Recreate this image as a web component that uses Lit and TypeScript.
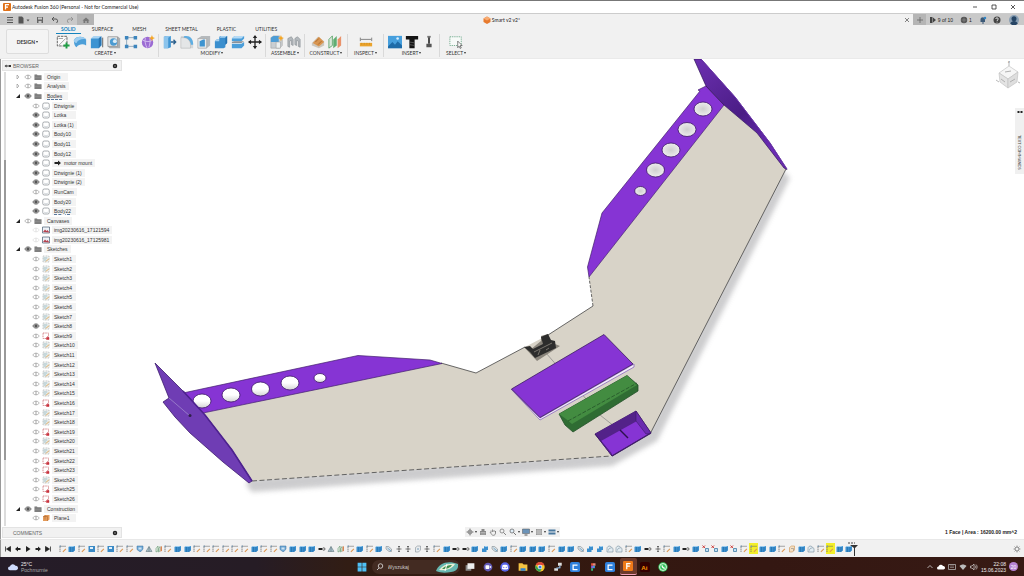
import { LitElement, html, svg, css } from "lit";
import { customElement } from "lit/decorators.js";
import { classMap } from "lit/directives/class-map.js";

const toolIcons: Record<string, unknown> = {
  sketch: svg`<path d="M1.500 1.500h11v11h-11z" fill="#fafafa" stroke="#555" stroke-dasharray="3 1"/><path d="M3 12L11 4M3 4h5" stroke="#999"/><path d="M8.500 12h7M12 8.500v7" stroke="#1f9d45" stroke-width="2.200"/>`,
  form: svg`<path d="M1 6C3 1 12 1 15 5v7c-3-2-8-2-11 2-2-1-3-4-3-8z" fill="#4d9fd8"/><path d="M1 6c3-5 11-5 14-1-4-1-9 0-11 4C2 9 1 8 1 6z" fill="#9ccdf0"/>`,
  extrude: svg`<path d="M1 4l9-3 3 2v9l-3 3H1z" fill="#3d94d2"/><path d="M1 4l3-3h9l-3 3z" fill="#a8d3f2"/><path d="M10 4l3-3v10l-3 4z" fill="#2a75b2"/><path d="M14.500 3v11" stroke="#555"/>`,
  revolve: svg`<path d="M1 2h12l2 2v11H3l-2-2z" fill="#a9adb0"/><path d="M1 2h11v11H1z" fill="#e1e3e4" stroke="#888" stroke-width=".7"/><circle cx="7.500" cy="8" r="4.200" fill="#4b9bd2"/><circle cx="9" cy="7" r="2.200" fill="#dcecf7"/>`,
  pattern: svg`<path d="M3 3h10M3 3v10h10" stroke="#8ba4b8" fill="none"/><g fill="#3d85bd"><path d="M1 1h4v4H1zM11 1h4v4h-4zM1 11h4v4H1zM11 11h4v4h-4z"/></g>`,
  sphere: svg`<circle cx="7.500" cy="8.500" r="6.500" fill="#9b6bd3"/><path d="M2 6c4 2 8 2 11 0M5 3c-1 4 0 8 2 12M10 3c1 4 0 8-1 11" stroke="#d8c2f2" fill="none"/><path d="M12.500 0l1 2.500 2.500 1-2.500 1-1 2.500-1-2.500-2.500-1 2.500-1z" fill="#f5a623"/>`,
  press: svg`<path d="M1 2l3-1h5v13l-3 1H1z" fill="#3f95d3"/><path d="M1 2l3-1h5L6 3v12H1z" fill="#8cc4ec"/><path d="M9 8h6M12 5.500L14.500 8l-2.500 2.500" stroke="#2b5f8c" stroke-width="1.500" fill="none"/>`,
  fillet: svg`<path d="M1 15V1h5c6 0 9 4 9 9v5z" fill="#d4d7d9"/><path d="M5 1h2c5 0 8 4 8 9v1H12C12 7 9 4 4 3z" fill="#5eaee3"/><path d="M1 15V3h3c5 0 8 4 8 8v4z" fill="#e4e6e7" stroke="#aaa" stroke-width=".5"/>`,
  shell: svg`<path d="M1 4l4-3h10v11l-4 3H1z" fill="#b5b9bc"/><path d="M1 4h10v11H1z" fill="#e8eaeb" stroke="#999" stroke-width=".6"/><path d="M3 7l4-2h2v8H3z" fill="#3f94d0"/>`,
  combine: svg`<path d="M6 2l2-1h7v8l-2 2v3l-2 1H1V7l2-2h3z" fill="#3b8fce"/><path d="M6 3l2-2h7l-2 2zM1 7l2-2h3v2z" fill="#a6d1f0"/><path d="M13 3l2-2v8l-2 2z" fill="#2672b0"/>`,
  split: svg`<path d="M1 4l3-3h11v3l-3 3H1z" fill="#4b9ed9"/><path d="M1 4l3-3h11l-3 3z" fill="#b5daf5"/><path d="M1 8l3-1h11l-3 2H1z" fill="#8b9299"/><path d="M1 10h11l3-2v4l-3 3H1z" fill="#4b9ed9"/>`,
  move: svg`<path d="M8 1v14M1 8h14" stroke="#222" stroke-width="1.500"/><path d="M8 0l2.500 3.500h-5zM8 16l2.500-3.500h-5zM0 8l3.500-2.500v5zM16 8l-3.500-2.500v5z" fill="#222"/>`,
  component: svg`<path d="M1 3l3-2h7v3h3v8l-3 3H1z" fill="#c9ced2" stroke="#999" stroke-width=".6"/><path d="M1 3l3-2h6v7H1z" fill="#4d9cd5"/><path d="M7 8h5v7H7z" fill="#edf0f1" stroke="#999" stroke-width=".6"/><path d="M12.500 0l1 2.500 2.500 1-2.500 1-1 2.500-1-2.500-2.500-1 2.500-1z" fill="#f5a623"/>`,
  joint: svg`<path d="M1 13V4l4-2 2 3v7l-2-1V6L3 7v7zM9 11V4l3-2 3 3v9l-2-1V7l-2-1v6z" fill="#b4b9bd" stroke="#868c91" stroke-width=".7"/>`,
  plane: svg`<path d="M1 9l7-7 7 5v5l-6 3-8-3z" fill="#ccc7bd"/><path d="M2 9l7-7 6 6-6 5z" fill="#d99550"/><path d="M5 8l4-4M8 11l4-4" stroke="#a5682b"/>`,
  midplane: svg`<path d="M1 5l4-4v11l-4 3z" fill="#dae8dc" stroke="#5ba56a"/><path d="M6 5l4-4v11l-4 3z" fill="#61ae73"/><path d="M11 5l4-4v11l-4 3z" fill="#e9926a"/>`,
  measure: svg`<path d="M1.500 3v4M14.500 3v4M2 5h12" stroke="#777"/><path d="M1 9h14v4H1z" fill="#eaa32d"/><path d="M3 9v2M6 9v2M9 9v2M12 9v2" stroke="#c98a1c" stroke-width=".7"/>`,
  image: svg`<path d="M0 1h16v14H0z" fill="#469fdd"/><path d="M0 13l5-5 3 3 3-4 5 5v3H0z" fill="#1e6ba8"/><circle cx="11" cy="4" r="1.500" fill="#d9efff"/>`,
  bolt: svg`<path d="M1 1h14v4H1zM5 5h6v10H5z" fill="#151515"/><path d="M5 8l6 1M5 11l6 1" stroke="#777" stroke-width=".7"/>`,
  derive: svg`<path d="M7 1h2v9H7z" fill="#333"/><path d="M5 10h6v4H5z" fill="#555"/><path d="M6 1h4v2H6z" fill="#777"/>`,
  select: svg`<path d="M1 2h13v10H1z" fill="#f7faf8" stroke="#6ea98a" stroke-dasharray="1.500 1"/><path d="M10 7l5 5-2.300.2 1.300 2.500-1.200.6-1.300-2.500L10 14.500z" fill="#fff" stroke="#333" stroke-width=".7"/>`,
};

const featureIcons: Record<string, unknown> = {
  s: svg`<path d="M2 14V2.500h12" fill="none" stroke="#666" stroke-width="1.500" stroke-dasharray="3 1"/><path d="M7 13l6-6 1.500 1.500-6 6z" fill="#dd954d"/><path d="M1 1h3v3H1z" fill="#7c98ae"/>`,
  e: svg`<path d="M1 4l4-2h9v9l-4 3H1z" fill="#3a8fce"/><path d="M1 4l4-2h9l-4 2z" fill="#9dcdf0"/><path d="M10 4v10M5 4v10" stroke="#1f6299"/>`,
  h: svg`<path d="M1 2h13v12H1z" fill="#3a8ac6"/><path d="M4 4h6v4H4z" fill="#dff0fc"/>`,
  v: svg`<path d="M2 2h12v6l-4 5H7L2 9z" fill="#6fa9d6" stroke="#376f9e"/><path d="M5 5h6v4H5z" fill="#cfe3f3"/>`,
  t: svg`<path d="M8 3l6 10H2z" fill="#a9c0ca" stroke="#51686f"/><path d="M8 3v10" stroke="#51686f"/>`,
  g: svg`<path d="M2 14V7l4-5v10zM7 14V7l3-4v9z" fill="#e5efe6" stroke="#498557"/><path d="M11 4l3-2v9l-3 3z" fill="#d98554"/>`,
  c: svg`<path d="M2 3h5l6 5v5H8L2 8z" fill="#dce2e5" stroke="#6d7980"/><path d="M5 6l7 6" stroke="#4f91c0" stroke-width="1.500"/>`,
  m: svg`<path d="M8 2v11M3 8h10M6 4l2-2 2 2M6 12l2 2 2-2" stroke="#444" stroke-width="1.400" fill="none"/>`,
  o: svg`<path d="M3 5l4-3h6v8l-4 4H3z" fill="#e9ecee" stroke="#717d85"/><circle cx="8" cy="8" r="2" fill="#9ab6c9"/>`,
  j: svg`<path d="M1 6h7v4H1z" fill="#222"/><circle cx="11.500" cy="8" r="2.500" fill="none" stroke="#333" stroke-width="1.400"/>`,
  b: svg`<path d="M6 2h8v8h-3v4H2V7h4z" fill="#3b8fce"/><path d="M6 4l2-2h6l-1 2z" fill="#a2cff0"/>`,
  f: svg`<path d="M2 14V7c0-4 3-5 6-5l6 5v7z" fill="#e3edf3" stroke="#637a8a"/><path d="M5 11c0-4 2-5 6-5" stroke="#637a8a" fill="none"/>`,
  x: svg`<path d="M1 1l5 5M6 1L1 6" stroke="#c9302c" stroke-width="1.800"/><path d="M7 7h6v6H7z" fill="#c5dff1" stroke="#36759f" stroke-width="1.500"/>`,
  r: svg`<path d="M3 5l4-3h6v8l-4 4H3z" fill="#f4dfc3" stroke="#c58236"/><path d="M6 7h5v5" stroke="#777" fill="none"/>`,
};
const featureNames: Record<string, string> = { s: "Sketch", e: "Extrude", h: "Hole", v: "Form", t: "Loft", g: "Plane", c: "Sweep", m: "Move", o: "Offset", j: "Joint", b: "Combine", f: "Fillet", x: "Remove", r: "Revolve" };
// One letter per timeline feature; a capital marks a highlighted one.
const features = "seshshssvtgseessssssessveeejtgsesecmmomsejjebceseeeseecbbffsejmsejexxexsSeesrefsSee";

const treeIcons: Record<string, unknown> = {
  folder: svg`<path d="M1 3h5l1 1.500h8V14H1z" fill="#777"/><path d="M1 6h14M1 9h14M1 12h14" stroke="#aaa" stroke-width=".7"/>`,
  body: svg`<rect x="1.500" y="2" width="13" height="12" rx="3" fill="#fff" stroke="#7a8087" stroke-width="1.300"/><path d="M4 10c2 2 6 2 8 0" stroke="#a8b2ba" fill="none"/>`,
  canvas: svg`<path d="M1 2h14v12H1z" fill="#eef3f8" stroke="#53657a" stroke-width="1.500"/><path d="M2 12l4-5 3 3 2-2 4 5z" fill="#b74450"/>`,
  sketch: svg`<path d="M2 2h12v12H2z" fill="#f8f9f9" stroke="#8a9193" stroke-dasharray="2 1"/><path d="M3 6h8M3 10h6" stroke="#6d9ba3" stroke-width="1.400"/><path d="M8 13l6-6" stroke="#d8a354" stroke-width="2"/>`,
  locked: svg`<path d="M2 2h11v11H2z" fill="#fff" stroke="#c05058" stroke-dasharray="3 1.500" stroke-width="1.300"/><path d="M11 8v3M9 11h5v4H9z" fill="#c8313c" stroke="#c8313c"/>`,
  plane: svg`<path d="M2 5l4-3h9v9l-4 3H2z" fill="#e49a58"/><path d="M2 5h9v9M6 2v9" stroke="#a7602c" fill="none"/>`,
};

interface Node { label: string; icon: string; visible?: boolean; faint?: boolean; group?: boolean; open?: boolean; linked?: boolean; active?: boolean }
const g = (label: string, visible: boolean, open: boolean, active = false): Node => ({ label, icon: "folder", group: true, visible, open, active });
const b = (label: string, visible = true, extra = {}): Node => ({ label, icon: "body", visible, ...extra });
const lockedSketches = [9, 16, 19, 22, 23, 25, 26];
const tree: Node[] = [
  g("Origin", false, false), g("Analysis", false, false), g("Bodies", true, true, true),
  b("Dźwignie", false), b("Lotka"), b("Lotka (1)"), b("Body10"), b("Body11"), b("Body12"),
  b("motor mount", true, { linked: true }), b("Dźwignie (1)"), b("Dźwignie (2)"), b("RunCam", false),
  b("Body20"), b("Body22", true, { active: true }),
  g("Canvases", false, true),
  { label: "img20230616_17121594", icon: "canvas", faint: true }, { label: "img20230616_17125981", icon: "canvas", faint: true },
  g("Sketches", true, true),
  ...Array.from({ length: 26 }, (_, i): Node => ({ label: `Sketch${i + 1}`, icon: lockedSketches.includes(i + 1) ? "locked" : "sketch", visible: i === 7 })),
  g("Construction", true, true),
  { label: "Plane1", icon: "plane" },
];

const groups = [
  { name: "CREATE", tools: ["sketch", "form", "extrude", "revolve", "pattern", "sphere"] },
  { name: "MODIFY", tools: ["press", "fillet", "shell", "combine", "split", "move"] },
  { name: "ASSEMBLE", tools: ["component", "joint"] },
  { name: "CONSTRUCT", tools: ["plane", "midplane"] },
  { name: "INSPECT", tools: ["measure"] },
  { name: "INSERT", tools: ["image", "bolt", "derive"] },
  { name: "SELECT", tools: ["select"] },
];

const ic = (body: unknown, cls = "i8") => html`<svg class=${cls} viewBox="0 0 16 16" aria-hidden="true">${body}</svg>`;

const base = css`
  * { box-sizing: border-box; }
  button { font: inherit; color: inherit; background: none; border: 0; padding: 0; margin: 0; display: flex; align-items: center; justify-content: center; white-space: nowrap; }
  svg { display: block; flex: none; }
  .i8 { width: 8px; height: 8px; }
  .i10 { width: 10px; height: 10px; }
  .i14 { width: 14px; height: 14px; }
`;

@customElement("title-bar")
class TitleBar extends LitElement {
  static styles = [base, css`
    :host { display: block; color: #222; }
    .title { height: 13px; border-top: 1px solid #777; background: #fff; display: flex; align-items: center; padding: 0 2px 0 3px; gap: 1px; font-size: 5px; }
    .name { flex: 1; }
    .win { width: 18px; height: 10px; }
    .tabs { height: 12px; display: flex; background: #f1f1f1; border-top: 1px solid #ccc; }
    .quick { display: flex; background: #c9c9c9; padding-left: 2px; }
    .quick button { width: 15px; }
    .quick .home { width: 17px; background: #b3b3b3; }
    .doc { flex: 1; display: flex; align-items: center; justify-content: center; gap: 1px; font-size: 5px; padding-left: 8px; }
    .side { display: flex; background: #c9c9c9; font-size: 5px; font-family: "Liberation Sans", Arial, sans-serif; align-items: stretch; }
    .close { width: 12px; }
    .side button { width: 14px; gap: 1px; }
    .side .plus { width: 13px; background: #b5b5b5; }
    .side .jobs { width: 30px; }
    .side .user { width: 20px; }
    .side .clock { width: 20px; }
  `];
  render() {
    return html`
      <div class="title">
        ${ic(svg`<rect width="16" height="16" rx="2" fill="#df7018"/><path d="M5 13V3h7M5 8h5" stroke="#fff" stroke-width="2.500" fill="none"/>`)}
        <span class="name">Autodesk Fusion 360 (Personal - Not for Commercial Use)</span>
        <button class="win" aria-label="Minimize">${ic(svg`<path d="M4 8h8" stroke="#222" stroke-width="1.500"/>`)}</button>
        <button class="win" aria-label="Maximize">${ic(svg`<path d="M4 4h8v8H4z" stroke="#222" stroke-width="1.500" fill="none"/>`)}</button>
        <button class="win" aria-label="Close">${ic(svg`<path d="M4 4l8 8M12 4l-8 8" stroke="#222" stroke-width="1.500"/>`)}</button>
      </div>
      <div class="tabs">
        <div class="quick">
          <button aria-label="Data panel">${ic(svg`<path d="M2 3h12M2 8h12M2 13h12" stroke="#555" stroke-width="2"/>`)}</button>
          <button aria-label="File">${ic(svg`<path d="M3 1h7l3 3v11H3z" fill="#555"/>`)}${ic(svg`<path d="M3 7h6l-3 4z" fill="#555"/>`, "i8")}</button>
          <button aria-label="Save">${ic(svg`<path d="M2 2h12v12H2z" fill="#666"/><path d="M4 3h8v4H4zM5 10h6v4H5z" fill="#c9c9c9"/>`)}</button>
          <button aria-label="Undo">${ic(svg`<path d="M3 6h7c4 0 4 6 1 8M6 2L2 6l4 4" stroke="#555" stroke-width="2" fill="none"/>`)}</button>
          <button aria-label="Redo">${ic(svg`<path d="M13 6H6c-4 0-4 6-1 8M10 2l4 4-4 4" stroke="#888" stroke-width="1.600" fill="none"/>`)}</button>
          <button class="home" aria-label="Home">${ic(svg`<path d="M1 9l7-6 7 6h-2v5H3V9z" fill="#777"/><path d="M7 10h2v4H7z" fill="#ccc"/>`)}</button>
        </div>
        <div class="doc">
          ${ic(svg`<path d="M8 1l7 4v7l-7 4-7-4V5z" fill="#e77a2d"/><path d="M8 1l7 4-7 4-7-4z" fill="#f7ab72"/>`)}
          <span>Smart v2 v2*</span>
        </div>
        <button class="close" aria-label="Close document">${ic(svg`<path d="M4 4l8 8M12 4l-8 8" stroke="#444" stroke-width="1.300"/>`)}</button>
        <div class="side">
          <button class="plus" aria-label="New design">${ic(svg`<path d="M8 2v12M2 8h12" stroke="#666" stroke-width="1.600"/>`)}</button>
          <button class="jobs">${ic(svg`<path d="M2 2h5v12H2zM8 3l6 5-6 5z" fill="#444"/>`)}<span>9 of 10</span></button>
          <button class="clock" aria-label="Job status">${ic(svg`<circle cx="8" cy="8" r="6.500" fill="#555"/><path d="M8 3v10M3 8h10" stroke="#999"/>`)}<span>1</span></button>
          <button aria-label="Notifications">${ic(svg`<path d="M3 12V7c0-6 9-6 9 0v5zM6 13h4v2H6z" fill="#3c5a78"/><circle cx="12" cy="4" r="2.500" fill="#3286c5"/>`)}</button>
          <button aria-label="Help">${ic(svg`<circle cx="8" cy="8" r="7" fill="#444"/><path d="M5.500 6c0-3.500 5-3 5 0 0 2-2.500 1.800-2.500 4M8 11.500v1.500" stroke="#fff" stroke-width="1.600" fill="none"/>`)}</button>
          <button class="user" aria-label="Account">${ic(svg`<circle cx="8" cy="8" r="8" fill="#8aa0b5"/><circle cx="8" cy="6" r="4" fill="#264565"/><path d="M2 14c2-6 10-6 12 0l-3 2H5z" fill="#264565"/>`, "i10")}</button>
        </div>
      </div>`;
  }
}

@customElement("tool-ribbon")
class ToolRibbon extends LitElement {
  static styles = [base, css`
    :host { display: flex; background: #f1f1f1; height: 34px; font-size: 5px; color: #333; border-bottom: 1px solid #eaeaea; }
    .design { width: 43px; height: 25px; margin: 4px 5px 0 6px; border: 1px solid #ddd; border-radius: 2px; background: #f4f4f4; font-weight: 700; }
    .main { display: flex; flex-direction: column; }
    .tabs { display: flex; gap: 19px; height: 9px; padding-left: 2px; }
    .tabs button { border-bottom: 1px solid transparent; height: 9px; }
    .tabs .on { color: #1583bd; border-color: #1583bd; padding: 0 5px; margin-right: -8px; font-weight: 700; }
    .groups { display: flex; }
    .group { display: flex; flex-direction: column; align-items: center; padding: 0 2px; border-right: 1px solid #d9d9d9; height: 23px; }
    .group:first-child { padding-left: 0; }
    .wide { padding: 0 4px; }
    .single { padding: 0 6px; }
    .group:last-child { border: 0; }
    .tools { display: flex; }
    .tool { width: 17px; height: 16px; }
    .menu { height: 6px; gap: 1px; }
    .caret { border: 1px solid transparent; border-top: 2px solid #333; border-bottom: 0; }
  `];
  render() {
    return html`
      <button class="design">DESIGN&nbsp;<span class="caret"></span></button>
      <div class="main">
        <nav class="tabs">
          ${["SOLID", "SURFACE", "MESH", "SHEET METAL", "PLASTIC", "UTILITIES"].map((t, i) => html`<button class=${classMap({ on: i === 0 })}>${t}</button>`)}
        </nav>
        <div class="groups">
          ${groups.map(gr => html`<div class=${classMap({ group: true, wide: gr.name === "CONSTRUCT", single: gr.tools.length === 1 })}>
            <div class="tools">${gr.tools.map(t => html`<button class="tool" aria-label=${t}>${ic(toolIcons[t], "i14")}</button>`)}</div>
            <button class="menu">${gr.name}<span class="caret"></span></button>
          </div>`)}
        </div>
      </div>`;
  }
}

@customElement("browser-panel")
class BrowserPanel extends LitElement {
  static styles = [base, css`
    :host { display: flex; flex-direction: column; width: 122px; border-left: 1px solid #999; font-size: 5px; font-family: "Liberation Sans", Arial, sans-serif; color: #333; padding-left: 1px; }
    .bar { display: flex; align-items: center; height: 11px; flex: none; background: #f1f1f1; border: 1px solid #e3e3e3; padding: 0 2px 0 1px; gap: 1px; color: #666; margin: 1px 0; }
    .bar span { flex: 1; }
    .body { flex: 1; min-height: 0; display: flex; }
    .scroll { width: 2px; margin: 0 8px 0 2px; background: #dcdcdc; display: flex; flex-direction: column; }
    .thumb { height: 66%; margin-top: 88px; background: #999; }
    .list { flex: 1; display: flex; flex-direction: column; list-style: none; margin: 0; padding: 0 0 3px; }
    .row { flex: 1; min-height: 0; display: flex; align-items: center; gap: 2px; padding-left: 18px; }
    .group { padding-left: 0; }
    .chip { background: #f3f3f3; padding: 0 3px; line-height: 8px; height: 8px; white-space: nowrap; display: flex; align-items: center; gap: 2px; min-width: 24px; }
    .row:not(.group) .chip { padding-left: 2px; }
    .active .chip { text-decoration: underline dashed #58789c; }
    .faint { opacity: .35; }
  `];
  render() {
    const dot = ic(svg`<circle cx="8" cy="8" r="4.500" fill="#222"/><path d="M6 8h4" stroke="#fff"/>`);
    return html`
      <div class="bar">${ic(svg`<path d="M1 8l4-3v2h3v2H5v2zM9 6h5v4H9z" fill="#333"/>`)}<span>BROWSER</span><button aria-label="Pin browser">${dot}</button></div>
      <div class="body">
        <div class="scroll"><div class="thumb"></div></div>
        <ul class="list">
          ${tree.map(n => html`<li class=${classMap({ row: true, group: !!n.group, active: !!n.active })}>
            ${n.group ? html`<button aria-label="Toggle ${n.label}">${ic(n.open ? svg`<path d="M12 4v8H4z" fill="#222"/>` : svg`<path d="M6 4l4 4-4 4z" fill="#fff" stroke="#777"/>`)}</button>` : ""}
            <button class=${classMap({ faint: !!n.faint })} aria-label="Visibility of ${n.label}">${ic(n.visible
              ? svg`<path d="M1.500 8c3-6 10-6 13 0-3 6-10 6-13 0z" fill="#aaa" stroke="#666" stroke-width="1.300"/><circle cx="8" cy="8" r="2.800" fill="#555"/>`
              : svg`<path d="M1.500 8c3-5 10-5 13 0-3 5-10 5-13 0z" fill="#fff" stroke="#999" stroke-width="1.300"/><path d="M8 4v8" stroke="#888" stroke-width="1.500"/>`)}</button>
            ${ic(treeIcons[n.icon])}
            <span class="chip">${n.linked ? ic(svg`<path d="M1 6h7V3l6 5-6 5v-3H1z" fill="#222"/>`) : ""}${n.label}</span>
          </li>`)}
        </ul>
      </div>
      <div class="bar">${ic(svg``)}<span>COMMENTS</span><button aria-label="Add comment">${dot}</button></div>`;
  }
}

@customElement("model-view")
class ModelView extends LitElement {
  static styles = [base, css`
    :host { display: block; background: #fff; min-width: 0; min-height: 0; }
    .scene { width: 100%; height: 100%; }
    .edge { fill: none; stroke: #444; stroke-width: .8; }
    .tag { font-size: 4px; fill: #888; }
  `];
  render() {
    const holes = (list: number[][], fill: string) => list.map(([x, y, rx, ry]) => svg`<ellipse cx=${x} cy=${y} rx=${rx} ry=${ry} fill=${fill} stroke="#3b1466" stroke-width=".8"/>`);
    return html`<svg class="scene" viewBox="0 59 1024 480" role="img" aria-label="Flying wing model">
      <defs>
        <filter id="soft" x="-10%" y="-10%" width="120%" height="120%"><feGaussianBlur stdDeviation="2.500"/></filter>
        <linearGradient id="holeL" x1="0" y1="0" x2="0" y2="1"><stop offset=".5" stop-color="#fff"/><stop offset="1" stop-color="#d4d4d4"/></linearGradient>
        <radialGradient id="holeR"><stop offset="0" stop-color="#cfcfcf"/><stop offset="1" stop-color="#ececec"/></radialGradient>
        <linearGradient id="fin" x1="700" y1="60" x2="770" y2="150" gradientUnits="userSpaceOnUse"><stop offset="0" stop-color="#6a2fae"/><stop offset=".6" stop-color="#4a1c85"/><stop offset="1" stop-color="#6b2bb5"/></linearGradient>
      </defs>
      <path d="M246 485L252 492L612 466L657 441L790 178L782 170L648 430L611 452L250 478z" fill="#c4c4c6" filter="url(#soft)" opacity=".85"/>
      <path d="M203 413L441 363L476 373L525 347L548 335L593 306L589 277L724 105L757 133L786 169L650 434L611 456L252 481L230 447z" fill="#d8d3c8"/>
      <path d="M441 363L476 373L525 347M548 335L593 306" class="edge"/>
      <path d="M593 306L589 277" class="edge" stroke-dasharray="3 1.500"/>
      <path d="M786 169L650 434" class="edge"/>
      <path d="M252 481L611 456" class="edge" stroke-dasharray="5 2.500"/>
      <path d="M706 86L724 105L589 277L587.500 267L602 213L700 91L698 90z" fill="#8634d4" stroke="#42206b" stroke-width=".7"/>
      ${holes([[703, 109, 9, 7], [687, 129.500, 9, 7], [671, 150, 9, 7], [655.500, 170, 9, 7], [640.500, 191, 5.800, 4.500]], "url(#holeR)")}
      <path d="M694 59H701L735 97L770 143L787 169.500L784 168L757 133L724 105L706 86z" fill="url(#fin)" stroke="#2f1257" stroke-width=".7"/>
      <path d="M701 59L735 97L770 143L787 169" stroke="#6f35b3" fill="none"/>
      <path d="M183 393L358 355.500L430 360L442 363.500L203 413z" fill="#8634d4" stroke="#42206b" stroke-width=".7"/>
      ${holes([[202, 401, 9, 7], [231, 395, 9, 7], [260.500, 389, 9, 7], [290, 383, 9, 7], [320, 378, 6, 4.500]], "url(#holeL)")}
      <path d="M155 363L183 391L205 415L232 450L252 481L249 483L223 462L190 433L175 417L163 402L169 398z" fill="#6f3db4" stroke="#3e1c6e" stroke-width=".8"/>
      <path d="M169 398L190 416" stroke="#9678c9"/><circle cx="190" cy="415.500" r="1.500" fill="#30204a"/>
      <path d="M183 391L205 415L232 450L252 481" stroke="#4e2290" stroke-width="1.600" fill="none"/>
      <path d="M546 353L600 415L624 434" stroke="#777" stroke-width=".6" fill="none"/>
      <path d="M524 347L530 350L541 341L541 336L548 334L550 342L560 346L537 361z" fill="#8a857c"/>
      <path d="M524 347L530 346L533 349L543 344L541 337L548 334L551 340L555 341L556 348L535 358L530 352z" fill="#2c2c2c"/>
      <path d="M534 352L552 343M538 355L540 350M546 350l3-2" stroke="#77736c"/>
      <path d="M511 389L540 420L634 367V364L540 418z" fill="#f1edf8" stroke="#8c67bc" stroke-width=".8"/>
      <path d="M511.500 389L604 334.500L633 364L540 417.500z" fill="#8634d4" stroke="#3b1c60" stroke-width=".8"/>
      <path d="M559 414L627 375.500L638 385V391L573 432L565 425z" fill="#2f6c33" stroke="#23502a" stroke-width=".8"/>
      <path d="M559 414L627 375.500L637 385L572 424L566 419z" fill="#438c41"/>
      <path d="M568 421L637 383" stroke="#1f4a25" stroke-dasharray="4 1.500" stroke-width=".7"/>
      <path d="M595 434L636 411L651 433L612 456z" fill="#8634d4" stroke="#35155c" stroke-width=".8"/>
      <path d="M595 434L636 411L637 421L601 441z" fill="#532289"/><path d="M636 411L651 433L646 434L636 421zM595 434L601 441L611 453L612 456z" fill="#6a2cae" stroke="#35155c" stroke-width=".5"/>
      <path d="M620 430L628 438" stroke="#2d114e" stroke-width="1.500"/>
      <path d="M612 456L651 433" fill="none" stroke="#41206a" stroke-width="1.300"/>
      <g stroke="#c4c4c4" stroke-width=".7"><path d="M999 73L1009 66L1018 72L1008 79z" fill="#f6f6f6"/><path d="M999 73L1008 79V88L1000 82z" fill="#e4e4e4"/><path d="M1008 79L1018 72L1017 82L1008 88z" fill="#dedede"/><path d="M1009 66V61M999 82l-3-2M1018 82l2 1" stroke="#999"/></g>
      <path d="M1005 72l6-1M1010 82l5-3M1001 79l4 3" stroke="#b0b0b0"/><text class="tag" x="1008" y="63">z</text>
    </svg>`;
  }
}

@customElement("feature-timeline")
class FeatureTimeline extends LitElement {
  static styles = [base, css`
    :host { display: flex; align-items: center; height: 18px; background: #f1f1f1; border-top: 1px solid #e8e8e8; border-left: 1px solid #999; padding-left: 2px; }
    .play { width: 10px; height: 12px; }
    .controls { display: flex; width: 55px; }
    .track { width: 78%; display: flex; }
    .item { flex: 1; min-width: 0; height: 11px; }
    .lit { background: #f2ee2a; }
    .marker { width: 10px; height: 16px; margin-left: -6px; }
    .spacer { flex: 1; }
    .gear { width: 15px; }
  `];
  render() {
    const play = [
      ["First", svg`<path d="M3 3v10M13 3v10L5 8z" fill="#222" stroke="#222" stroke-width="1.500"/>`],
      ["Previous", svg`<path d="M2 8l6-5v3h5v4H8v3z" fill="#222"/>`],
      ["Play", svg`<path d="M4 2l9 6-9 6z" fill="#222"/>`],
      ["Next", svg`<path d="M14 8L8 3v3H3v4h5v3z" fill="#222"/>`],
      ["Last", svg`<path d="M13 3v10M3 3v10l8-5z" fill="#222" stroke="#222" stroke-width="1.500"/>`],
    ];
    return html`
      <div class="controls">${play.map(([n, p]) => html`<button class="play" aria-label=${n}>${ic(p)}</button>`)}</div>
      <div class="track">${[...features].map(f => html`<button class=${classMap({ item: true, lit: f === "S" })} aria-label=${featureNames[f.toLowerCase()]}>${ic(featureIcons[f.toLowerCase()])}</button>`)}</div>
      <svg class="marker" viewBox="0 0 10 16" aria-hidden="true"><path d="M0 2h7" stroke="#444" stroke-dasharray="2 1"/><path d="M2 4h8L7 7v8H6V7z" fill="#333"/></svg>
      <span class="spacer"></span>
      <button class="gear" aria-label="Timeline settings">${ic(svg`<circle cx="8" cy="8" r="4" fill="none" stroke="#888" stroke-width="2"/><path d="M8 1v3M8 12v3M1 8h3M12 8h3M3 3l2 2M11 11l2 2M13 3l-2 2M5 11l-2 2" stroke="#888" stroke-width="1.500"/>`)}</button>`;
  }
}

@customElement("desktop-taskbar")
class DesktopTaskbar extends LitElement {
  static styles = [base, css`
    :host { display: grid; grid-template-columns: 1fr auto 1fr; align-items: center; height: 19px; background: linear-gradient(90deg, #251c28, #261c25 25%, #321d14 34%, #33190f 50%, #341712 75%, #371a14); color: #eee; font-family: "Liberation Sans", Arial, sans-serif; font-size: 5px; line-height: 6px; }
    .weather { display: flex; gap: 3px; padding-left: 8px; align-items: center; }
    .dim { color: #aaa; }
    .center { display: flex; align-items: center; padding-left: 4px; }
    .app { width: 17px; height: 17px; margin-right: 1px; border-radius: 2px; }
    .app:nth-child(even) { margin-right: 0; }
    .on { background: #6d3b2c; border-bottom: 1px solid #f0a0b8; }
    .search { display: flex; align-items: center; gap: 4px; width: 88px; height: 14px; margin: 0 2px 0 5px; padding: 0 2px 0 4px; border-radius: 7px; background: #432b22; }
    .field { flex: 1; min-width: 0; background: none; border: 0; padding: 0; color: #ddd; font: inherit; outline: 0; }
    .field::placeholder { color: #ccc; opacity: 1; }
    .fish { width: 22px; height: 12px; }
    .tray { display: flex; align-items: center; justify-content: flex-end; gap: 3px; padding-right: 6px; }
    .time { text-align: right; }
    .badge { width: 9px; height: 9px; border-radius: 50%; background: #b583d4; color: #fff; display: grid; place-items: center; }
    .txt { font-weight: 700; fill: #f90; font-size: 10px; }
  `];
  render() {
    const blue = svg`<rect width="16" height="16" rx="3" fill="#2f80dc"/><path d="M12 5H5v7h7" stroke="#fff" stroke-width="2" fill="none"/>`;
    const apps: [string, unknown][] = [
      ["Task view", svg`<path d="M1 5h9v9H1z" fill="#888"/><path d="M4 2h11v9H4z" fill="#eee"/>`],
      ["Chat", svg`<circle cx="8" cy="8" r="7" fill="#6057b5"/><rect x="4" y="5" width="6" height="6" rx="1" fill="#fff"/><path d="M10 8l3-2v4z" fill="#fff"/>`],
      ["Discord", svg`<circle cx="8" cy="8" r="7.500" fill="#5865e8"/><path d="M4 5c3-1 5-1 8 0l1 6-3 1H6l-3-1z" fill="#fff"/><circle cx="6" cy="8.500" r="1" fill="#5865e8"/><circle cx="10" cy="8.500" r="1" fill="#5865e8"/>`],
      ["Files", svg`<path d="M1 2h6l2 2h6v10H1z" fill="#f5c343"/><path d="M4 10h8v4H4z" fill="#2d83d4"/>`],
      ["Chrome", svg`<circle cx="8" cy="8" r="7.500" fill="#f4c62c"/><path d="M1 5a7.500 7.500 0 0 1 14 0H8z" fill="#df4a38"/><path d="M1 5a7.500 7.500 0 0 0 7 10.500L11 10H5z" fill="#36a052"/><circle cx="8" cy="8" r="3.500" fill="#fff"/><circle cx="8" cy="8" r="2.500" fill="#3c79dd"/>`],
      ["Remote", svg`<path d="M8 1h6v5H8zM2 10h6v4H2z" fill="#ddd"/><path d="M11 6v3L5 10" stroke="#8bb6e0" stroke-width="2" fill="none"/>`],
      ["Cura", blue],
      ["Figma", svg`<path d="M5 2h3v4H5z" fill="#e7573a"/><path d="M8 2h4v4H8z" fill="#e58a7a"/><path d="M5 6h3v4H5z" fill="#8d57d8"/><path d="M8 6h3v4H8z" fill="#3f9fe0"/><path d="M5 10h3v4H5z" fill="#37b779"/>`],
      ["Slicer", blue],
      ["Fusion", svg`<rect width="16" height="16" rx="2" fill="#ef7a19"/><path d="M6 13V4h6M6 8h5" stroke="#fff" stroke-width="2" fill="none"/>`],
      ["Illustrator", svg`<rect width="16" height="16" rx="3" fill="#330000"/><text x="2" y="12" class="txt">Ai</text>`],
      ["WhatsApp", svg`<circle cx="8" cy="8" r="7.500" fill="#35c45c"/><circle cx="8" cy="8" r="5.500" fill="none" stroke="#fff" stroke-width="1.300"/><path d="M5.500 5c0 3 2 5.500 5 6l.5-2-2-.5-1.500-2 .5-1z" fill="#fff"/>`],
    ];
    return html`
      <div class="weather">${ic(svg`<path d="M3 13a3 3 0 0 1 0-6 5 5 0 0 1 9-1 3.500 3.500 0 0 1 1 7z" fill="#cfdcff"/>`, "i10")}<div>25°C<br><span class="dim">Pochmurnie</span></div></div>
      <div class="center">
        <button aria-label="Start">${ic(svg`<path d="M1 1h6.500v6.500H1zM8.500 1H15v6.500H8.500zM1 8.500h6.500V15H1zM8.500 8.500H15V15H8.500z" fill="#4fc0f5"/>`, "i10")}</button>
        <label class="search">${ic(svg`<circle cx="9" cy="6" r="4.500" fill="none" stroke="#eee" stroke-width="1.500"/><path d="M6 10l-4 4" stroke="#eee" stroke-width="1.500"/>`)}
          <input class="field" type="text" placeholder="Wyszukaj" aria-label="Wyszukaj">
          <svg class="fish" viewBox="0 0 22 12" aria-hidden="true"><path d="M0 10C3 2 12-1 22 3c1 4-2 8-7 8-6 1-10 1-15-1z" fill="#66b7b0"/><path d="M3 9c4-5 9-7 16-6-3 5-9 7-16 6z" fill="#e9efd6"/><path d="M6 8c3-3 6-4 10-4-2 3-5 4-10 4z" fill="#3e8f4d"/><path d="M11 3l-2 7" stroke="#fff"/></svg>
        </label>
        ${apps.map(([n, p]) => html`<button class=${classMap({ app: true, on: n === "Fusion" })} aria-label=${n}>${ic(p, "i10")}</button>`)}
      </div>
      <div class="tray">
        ${ic(svg`<path d="M3 10l5-5 5 5" stroke="#ddd" stroke-width="1.500" fill="none"/>`)}
        ${ic(svg`<path d="M3 13a3 3 0 0 1 0-6 5 5 0 0 1 9-1 3.500 3.500 0 0 1 1 7z" fill="#fff"/>`)}
        ${ic(svg`<path d="M1 3h14v10H1z" fill="none" stroke="#bbb" stroke-width="1.500"/><path d="M4 6h8M4 9h8" stroke="#bbb"/>`)}
        ${ic(svg`<path d="M1 6c4-4 10-4 14 0l-7 8z" fill="#bbb"/>`)}
        ${ic(svg`<path d="M1 6h3l4-4v12l-4-4H1zM10 5c2 2 2 4 0 6M12 3c3 3 3 7 0 10" fill="none" stroke="#ddd" stroke-width="1.300"/>`)}
        <div class="time">22:08<br>15.06.2023</div>
        <span class="badge">20</span>
      </div>`;
  }
}

@customElement("app-root")
class AppRoot extends LitElement {
  static styles = [base, css`
    :host { display: grid; grid-template-rows: auto auto 1fr auto auto; height: 100vh; overflow: hidden; font-family: Lato, "Liberation Sans", Arial, sans-serif; background: #fff; }
    .work { display: grid; grid-template-columns: 122px 1fr auto; grid-template-rows: 1fr auto; min-height: 0; }
    .model { grid-area: 1 / 1 / 3 / 4; }
    .browser { grid-area: 1 / 1 / 3 / 2; z-index: 1; min-height: 0; }
    .panel { grid-area: 1 / 3 / 2 / 4; z-index: 1; width: 9px; height: 66px; margin-top: 49px; background: #f0f0f0; display: flex; flex-direction: column; align-items: center; justify-content: space-between; font-size: 4px; color: #444; }
    .vert { writing-mode: vertical-rl; padding-bottom: 4px; }
    .foot { grid-area: 2 / 1 / 3 / 4; z-index: 1; display: grid; grid-template-columns: 1fr auto 1fr; align-items: center; height: 14px; font-size: 5px; }
    .nav { grid-column: 2; display: flex; background: #f1f1f1; height: 10px; padding: 0 1px; gap: 2px; align-items: center; }
    .caret { border: 1px solid transparent; border-top: 2px solid #333; border-bottom: 0; margin-left: 1px; }
    .status { text-align: right; font-weight: 700; color: #222; padding-right: 7px; font-family: "Liberation Sans", Arial, sans-serif; }
  `];
  render() {
    const nav: [string, unknown, boolean][] = [
      ["Orbit", svg`<path d="M8 1v14M1 8h14" stroke="#666" stroke-width="1.500"/><circle cx="8" cy="8" r="4" fill="none" stroke="#666" stroke-width="1.300"/>`, true],
      ["Look at", svg`<path d="M2 6h12v8H2zM5 2h6v4H5z" fill="#888"/><path d="M3 9h10M3 12h10" stroke="#ddd"/>`, false],
      ["Pan", svg`<path d="M4 9V5M7 8V3M10 8V4M13 9V6v4c0 6-7 6-9 1L2 8" stroke="#777" stroke-width="1.600" fill="none"/>`, false],
      ["Zoom", svg`<circle cx="6" cy="6" r="4" fill="none" stroke="#777" stroke-width="1.500"/><path d="M9 9l5 5" stroke="#777" stroke-width="1.800"/>`, false],
      ["Fit", svg`<circle cx="6" cy="6" r="4" fill="#e0eef8" stroke="#666" stroke-width="1.500"/><path d="M9 9l5 5" stroke="#666" stroke-width="1.800"/>`, true],
      ["Display", svg`<path d="M1 2h14v9H1z" fill="#6b93b8" stroke="#555"/><path d="M5 14h6" stroke="#555" stroke-width="2"/>`, true],
      ["Grid", svg`<path d="M2 2h12v12H2z" fill="#999"/><path d="M2 6h12M2 10h12M6 2v12M10 2v12" stroke="#ddd"/>`, true],
      ["Viewports", svg`<path d="M1 3h14v4H1zM1 9h14v4H1z" fill="#49789f"/>`, true],
    ];
    return html`
      <title-bar></title-bar>
      <tool-ribbon></tool-ribbon>
      <main class="work">
        <model-view class="model"></model-view>
        <browser-panel class="browser"></browser-panel>
        <aside class="panel">${ic(svg`<path d="M3 6h4v4H3zM9 6h4v4H9z" fill="#222"/>`)}<span class="vert">TEXT COMMANDS</span></aside>
        <div class="foot">
          <div class="nav">${nav.map(([n, p, c]) => html`<button aria-label=${n}>${ic(p)}${c ? html`<span class="caret"></span>` : ""}</button>`)}</div>
          <div class="status">1 Face | Area : 16200.00 mm^2</div>
        </div>
      </main>
      <feature-timeline></feature-timeline>
      <desktop-taskbar></desktop-taskbar>`;
  }
}
